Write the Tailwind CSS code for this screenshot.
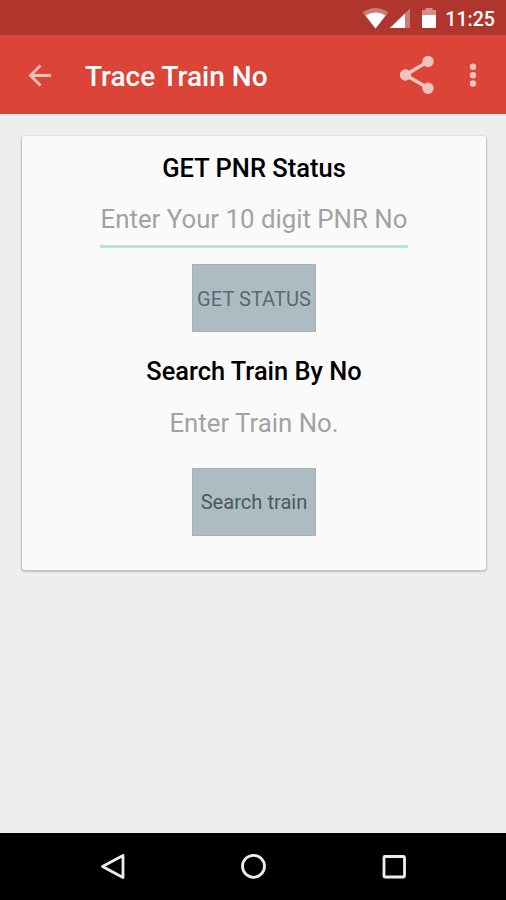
<!DOCTYPE html>
<html lang="en">
<head>
    <meta charset="UTF-8" />
    <meta name="viewport" content="width=device-width, initial-scale=1" />
    <title>Trace Train No</title>
    <script src="https://cdn.jsdelivr.net/npm/@tailwindcss/browser@4"></script>
</head>
<body class="bg-[#eeeeee] font-[Roboto,sans-serif]">
    <div class="flex flex-col h-[900px] w-[506px] overflow-hidden">
        <!-- Status bar -->
        <div class="flex items-center justify-end h-[35px] shrink-0 bg-[#b0362d] pr-[11px] text-white">
            <svg class="w-[76px] h-[35px] mr-[7px]" viewBox="362 0 76 35">
                <path d="M362.500 12.500Q375.500 3.500 388.500 12.500L375.500 28.500Z" fill="#fff" fill-opacity=".35" />
                <path d="M365.500 15.500Q375.500 9.500 385.500 15.500L375.500 28.500Z" fill="#fff" />
                <path d="M390 28L410 8.500V28Z" fill="#fff" fill-opacity=".35" />
                <path d="M390 28L405 13.500V28Z" fill="#fff" />
                <path d="M425.500 8H432.500V10H436V15H422V10H425.500Z" fill="#fff" fill-opacity=".45" />
                <path d="M422 15H436V27Q436 28 435 28H423Q422 28 422 27Z" fill="#fff" />
            </svg>
            <span class="text-[19.600px] font-medium leading-[24px] mt-[5px]">11:25</span>
        </div>

        <!-- Toolbar -->
        <header class="flex items-center h-[79px] shrink-0 bg-[#db4437] pl-[27px] pr-[29px]">
            <svg class="w-[24px] h-[24px]" viewBox="0 0 24 24" fill="none" stroke="#f4bfb9" stroke-width="2.800">
                <path d="M24 12.500H3.500M13.500 2.500L3.500 12.500L13.500 22.500" />
            </svg>
            <h1 class="ml-[34px] text-[28px] font-medium leading-8 text-white mt-[5px]">Trace Train No</h1>
            <svg class="ml-auto w-[36px] h-[40px]" viewBox="0.500 0 36 40" fill="#f3c2bd">
                <path d="M29.500 6.500L7 20L29.500 33" fill="none" stroke="#f3c2bd" stroke-width="3.600" />
                <circle cx="29.500" cy="6.500" r="5.700" />
                <circle cx="7" cy="20" r="5.700" />
                <circle cx="29.500" cy="33.300" r="5.700" />
            </svg>
            <svg class="ml-[34px] w-[8px] h-[26px]" viewBox="0 0 8 26" fill="#f3c2bd">
                <circle cx="4" cy="4.800" r="3.200" />
                <circle cx="4" cy="13.200" r="3.200" />
                <circle cx="4" cy="21.500" r="3.200" />
            </svg>
        </header>

        <main class="grow pt-[22px] pl-[22px] pr-[20px]">
            <section class="flex flex-col items-center h-[434px] rounded-[3px] bg-[#fafafa] shadow-[0_1px_2px_1px_rgba(0,0,0,0.2)] pt-[16px]">
                <h2 class="text-[25.500px] font-medium leading-[32px] text-black">GET PNR Status</h2>
                <div class="flex justify-center w-[308px] h-[64px] border-b-[3px] border-[#b9e2dc] pt-[19px] text-[25.800px] leading-[32px] text-[#a2a2a2] whitespace-nowrap">Enter Your 10 digit PNR No</div>
                <button class="mt-[16px] w-[124px] h-[68px] bg-[#adbcc3] border border-[#a3b1b8] pt-[2px] text-[20.100px] text-[#5d686e] whitespace-nowrap">GET STATUS</button>
                <h2 class="mt-[23px] text-[25.400px] font-medium leading-[32px] text-black">Search Train By No</h2>
                <div class="mt-[20px] text-[25.800px] leading-[32px] text-[#a2a2a2]">Enter Train No.</div>
                <button class="mt-[29px] w-[124px] h-[68px] bg-[#adbcc3] border border-[#a3b1b8] pt-px text-[20.100px] text-[#4c575d] whitespace-nowrap">Search train</button>
            </section>
        </main>

        <!-- Navigation bar -->
        <nav class="flex items-center justify-between h-[67px] shrink-0 bg-black px-[99px]">
            <svg class="w-[28px] h-[28px]" viewBox="0 0 28 28" fill="none" stroke="#ededed" stroke-width="2.800" stroke-linejoin="round">
                <path d="M3.500 13.500L24 2.500V24.500Z" />
            </svg>
            <svg class="w-[28px] h-[28px]" viewBox="0 0 28 28" fill="none" stroke="#ededed" stroke-width="2.800">
                <circle cx="14.500" cy="13.300" r="11" />
            </svg>
            <svg class="w-[28px] h-[28px]" viewBox="0 0 28 28" fill="none" stroke="#ededed" stroke-width="2.800" stroke-linejoin="round">
                <rect x="5" y="3.500" width="20.500" height="20.500" rx="1" />
            </svg>
        </nav>
    </div>
</body>
</html>
